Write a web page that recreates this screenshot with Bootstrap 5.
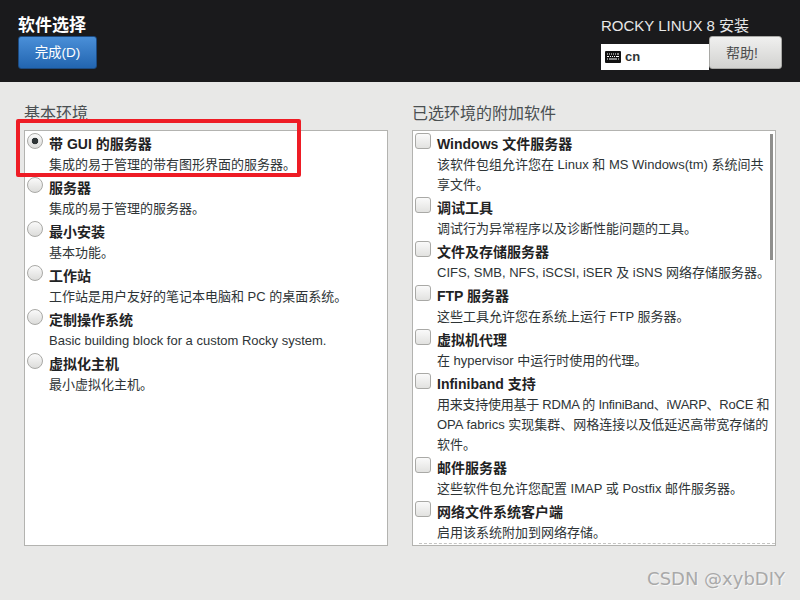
<!DOCTYPE html>
<html lang="zh-CN">
<head>
  <meta charset="UTF-8">
  <title>软件选择</title>
  <meta name="viewport" content="width=device-width, initial-scale=1.0">
  <link href="https://cdn.jsdelivr.net/npm/bootstrap@5.3.2/dist/css/bootstrap.min.css" rel="stylesheet">
  <style>
    html, body {
      height: 100%;
    }
    body {
      width: 800px;
      height: 600px;
      overflow: hidden;
      position: relative;
      background: #e8e8e7;
      color: #2e3436;
      font-family: "Liberation Sans", "Noto Sans CJK SC", sans-serif;
      font-size: 13px;
      line-height: 20px;
    }
    .top-bar {
      height: 82px;
      background: #1a1a1c;
      padding: 15px 18px 0 18px;
    }
    .page-title {
      color: #fff;
      font-size: 17px;
      font-weight: 700;
      line-height: 21px;
    }
    .done-btn {
      display: block;
      width: 79px;
      height: 33px;
      padding: 0;
      font-size: 13.5px;
      color: #fff;
      background: linear-gradient(#4a8fd8, #2265b0);
      border: 1px solid #1c4a80;
      border-radius: 3px;
    }
    .product {
      color: #e8e8e8;
      font-size: 15px;
      line-height: 21px;
    }
    .kb-box {
      width: 108px;
      height: 26px;
      margin-top: 8px;
      background: #fff;
      color: #2e3436;
      font-weight: 700;
      font-size: 13px;
      padding-left: 4px;
      gap: 4px;
    }
    .help-btn {
      width: 73px;
      height: 33px;
      padding: 0 7px 0 0;
      font-size: 14px;
      color: #4d4d4d;
      background: linear-gradient(#f0f0ef, #d2d2d0);
      border: 1px solid #a8a8a5;
      border-radius: 3px;
    }
    .main-wrap {
      padding: 0 24px;
    }
    .side-col {
      width: 364px;
    }
    .col-head {
      font-size: 16px;
      line-height: 22px;
      height: 22px;
      margin-top: 21px;
      margin-bottom: 5px;
      color: #4a4f51;
    }
    .list-box {
      height: 416px;
      background: #fff;
      border: 1px solid #b3b3b0;
      overflow: hidden;
      position: relative;
      padding-top: 2px;
    }
    .opt-row {
      display: flex;
      margin-bottom: 2px;
    }
    .opt-mark {
      flex: 0 0 24px;
      padding: 0 0 0 2px;
    }
    .opt-text {
      padding-top: 1px;
      white-space: nowrap;
    }
    .radio-dot {
      display: block;
      width: 16px;
      height: 16px;
      border-radius: 50%;
      border: 1px solid #a9a9a6;
      background: linear-gradient(#fafafa, #dcdcda);
    }
    .radio-dot.on {
      background: radial-gradient(circle, #2e3436 0 3px, transparent 3.6px), linear-gradient(#fafafa, #dcdcda);
    }
    .check-box {
      display: block;
      width: 16px;
      height: 16px;
      border-radius: 3px;
      border: 1px solid #a9a9a6;
      background: linear-gradient(#fafafa, #e2e2e0);
    }
    .opt-name {
      font-size: 14px;
      font-weight: 700;
      color: #1f2324;
      margin-bottom: 1px;
    }
    .tight-line {
      letter-spacing: -0.25px;
    }
    .scroll-thumb {
      position: absolute;
      right: 2px;
      top: 3px;
      width: 3px;
      height: 126px;
      background: #8f8f8d;
    }
    .fade-line {
      position: absolute;
      left: 6px;
      right: 0;
      bottom: 1px;
      border-bottom: 1px dashed #c4c4c2;
    }
    .red-frame {
      position: absolute;
      left: 16px;
      top: 119px;
      width: 285px;
      height: 58px;
      border: 4px solid #ee1c25;
      border-radius: 2px;
    }
    .mark-text {
      position: absolute;
      right: 15px;
      top: 566px;
      font-family: "DejaVu Sans", sans-serif;
      font-size: 18px;
      line-height: 26px;
      color: #a9a9a9;
      text-shadow: 1px 1px 0 #f6f6f6;
    }
  </style>
</head>
<body>

  <!-- Header -->
  <header class="top-bar d-flex justify-content-between">
    <div>
      <div class="page-title">软件选择</div>
      <button class="done-btn">完成(D)</button>
    </div>
    <div>
      <div class="product">ROCKY LINUX 8 安装</div>
      <div class="d-flex align-items-start">
        <div class="kb-box d-flex align-items-center">
          <svg width="16" height="12" viewBox="0 0 16 12"><rect width="16" height="12" rx="1" fill="#111"/><path d="M2 3h1M4 3h1M6 3h1M8 3h1M10 3h1M12 3h2M2 5.5h2M5 5.5h1M7 5.5h1M9 5.5h1M11 5.5h3M2 8h1M4 8h8M13 8h1" stroke="#fff" stroke-width="1.2"/></svg>
          <span>cn</span>
        </div>
        <button class="help-btn">帮助!</button>
      </div>
    </div>
  </header>

  <!-- Main -->
  <main class="d-flex justify-content-between main-wrap">
    <section class="side-col">
      <div class="col-head">基本环境</div>
      <div class="list-box" id="envList"></div>
    </section>
    <section class="side-col">
      <div class="col-head">已选环境的附加软件</div>
      <div class="list-box" id="addonList">
        <div class="scroll-thumb"></div>
        <div class="fade-line"></div>
      </div>
    </section>
  </main>

  <div class="red-frame"></div>
  <div class="mark-text">CSDN @xybDIY</div>

  <script>
    const envs = [
      ["带 GUI 的服务器", "集成的易于管理的带有图形界面的服务器。"],
      ["服务器", "集成的易于管理的服务器。"],
      ["最小安装", "基本功能。"],
      ["工作站", "工作站是用户友好的笔记本电脑和 PC 的桌面系统。"],
      ["定制操作系统", "Basic building block for a custom Rocky system."],
      ["虚拟化主机", "最小虚拟化主机。"]
    ];
    const addons = [
      ["Windows 文件服务器", "该软件包组允许您在 Linux 和 MS Windows(tm) 系统间共<br>享文件。"],
      ["调试工具", "调试行为异常程序以及诊断性能问题的工具。"],
      ["文件及存储服务器", "CIFS, SMB, NFS, iSCSI, iSER 及 iSNS 网络存储服务器。"],
      ["FTP 服务器", "这些工具允许您在系统上运行 FTP 服务器。"],
      ["虚拟机代理", "在 hypervisor 中运行时使用的代理。"],
      ["Infiniband 支持", "<span class=\"tight-line\">用来支持使用基于 RDMA 的 InfiniBand、iWARP、RoCE 和</span><br>OPA fabrics 实现集群、网格连接以及低延迟高带宽存储的<br>软件。"],
      ["邮件服务器", "这些软件包允许您配置 IMAP 或 Postfix 邮件服务器。"],
      ["网络文件系统客户端", "启用该系统附加到网络存储。"]
    ];

    function addRows(boxId, rows, markClass) {
      const box = document.getElementById(boxId);
      rows.forEach((r, i) => {
        const row = document.createElement("div");
        row.className = "opt-row";
        const on = markClass === "radio-dot" && i === 0 ? " on" : "";
        row.innerHTML = `<div class="opt-mark"><span class="${markClass}${on}"></span></div>
          <div class="opt-text"><div class="opt-name">${r[0]}</div><div>${r[1]}</div></div>`;
        box.appendChild(row);
      });
    }

    addRows("envList", envs, "radio-dot");
    addRows("addonList", addons, "check-box");
  </script>
  <script src="https://cdn.jsdelivr.net/npm/bootstrap@5.3.2/dist/js/bootstrap.bundle.min.js"></script>
</body>
</html>
